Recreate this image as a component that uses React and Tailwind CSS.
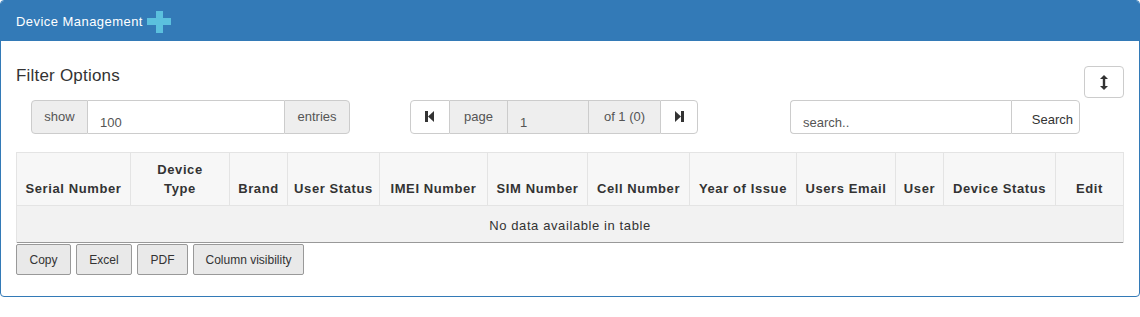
import { useState } from "react";

const columns = [
  { label: "Serial Number", w: "w-[114px]" },
  { label: "Device Type", w: "w-[99px]", wrap: true },
  { label: "Brand", w: "w-[58px]" },
  { label: "User Status", w: "w-[92px]" },
  { label: "IMEI Number", w: "w-[108px]" },
  { label: "SIM Number", w: "w-[100px]" },
  { label: "Cell Number", w: "w-[102px]" },
  { label: "Year of Issue", w: "w-[107px]" },
  { label: "Users Email", w: "w-[99px]" },
  { label: "User", w: "w-[48px]" },
  { label: "Device Status", w: "w-[112px]" },
  { label: "Edit", w: "w-[68px]" },
];

function PlusIcon() {
  return (
    <svg width="24" height="22" viewBox="0 0 24 22" className="ml-[4px]">
      <rect x="0" y="7" width="24" height="7" fill="#5bc0de" />
      <rect x="9" y="0" width="7" height="22" fill="#5bc0de" />
    </svg>
  );
}

function FirstIcon() {
  return (
    <svg width="10" height="11" viewBox="0 0 10 11">
      <rect x="0" y="0" width="3" height="11" fill="#333" />
      <path d="M9 0 L3 5.5 L9 11 Z" fill="#333" />
    </svg>
  );
}

function LastIcon() {
  return (
    <svg width="10" height="11" viewBox="0 0 10 11">
      <path d="M1 0 L7 5.5 L1 11 Z" fill="#333" />
      <rect x="7" y="0" width="3" height="11" fill="#333" />
    </svg>
  );
}

function ResizeIcon() {
  return (
    <svg width="8" height="15" viewBox="0 0 8 15">
      <path d="M4 0 L8 4 L5.2 4 L5.2 11 L8 11 L4 15 L0 11 L2.8 11 L2.8 4 L0 4 Z" fill="#333" />
    </svg>
  );
}

export default function App() {
  const [perPage, setPerPage] = useState("100");
  const [query, setQuery] = useState("");

  return (
    <div className="bg-white w-[1140px] h-[317px] font-['Liberation_Sans',Arial,sans-serif] text-[#333]">
      <div className="w-[1140px] h-[297px] border border-[#337ab7] rounded-[4px] overflow-hidden">
        {/* Heading */}
        <div className="h-[40px] bg-[#337ab7] flex items-center pl-[15px] pt-[1px]">
          <span className="text-white text-[13px] tracking-[0.45px]">Device Management</span>
          <PlusIcon />
        </div>

        <div className="px-[15px] pt-[25px]">
          <div className="flex justify-between items-start">
            <h3 className="text-[17px] leading-[18px] mt-[1px] tracking-[0.2px]">Filter Options</h3>
            <button className="w-[40px] h-[32px] border border-[#ccc] rounded-[4px] bg-white flex items-center justify-center">
              <ResizeIcon />
            </button>
          </div>

          {/* Controls */}
          <div className="flex items-start mt-[2px] h-[34px]">
            <div className="ml-[15px] flex h-[34px] text-[13px] text-[#555]">
              <span className="w-[57px] bg-[#eee] border border-[#ccc] rounded-l-[4px] flex items-center justify-center">
                show
              </span>
              <input
                value={perPage}
                onChange={(e) => setPerPage(e.target.value)}
                className="w-[196px] border-y border-[#ccc] pl-[12px] pt-[12px] text-[13px] text-[#555] outline-none bg-white"
              />
              <span className="w-[66px] bg-[#eee] border border-[#ccc] rounded-r-[4px] flex items-center justify-center">
                entries
              </span>
            </div>

            <div className="ml-[60px] flex h-[34px] text-[13px] text-[#555]">
              <button className="w-[40px] bg-white border border-[#ccc] rounded-l-[4px] flex items-center justify-center pb-[2px]">
                <FirstIcon />
              </button>
              <span className="w-[57px] bg-[#eee] border-y border-[#ccc] flex items-center justify-center">
                page
              </span>
              <input
                value="1"
                readOnly
                className="w-[82px] bg-[#eee] border border-[#ccc] pl-[12px] pt-[12px] text-[13px] text-[#555] outline-none"
              />
              <span className="w-[71px] bg-[#eee] border-y border-[#ccc] flex items-center justify-center">
                of 1 (0)
              </span>
              <button className="w-[38px] bg-white border border-[#ccc] rounded-r-[4px] flex items-center justify-center pb-[2px]">
                <LastIcon />
              </button>
            </div>

            <div className="ml-[92px] flex h-[34px] text-[13px] text-[#555]">
              <input
                value={query}
                onChange={(e) => setQuery(e.target.value)}
                placeholder="search.."
                className="w-[221px] border border-r-0 border-[#ccc] rounded-l-[4px] pl-[12px] pt-[12px] text-[13px] text-[#555] placeholder:text-[#555] outline-none"
              />
              <button className="w-[69px] bg-white border border-[#ccc] rounded-r-[4px] flex items-end justify-end pr-[6px] pb-[4px] text-[#333]">
                Search
              </button>
            </div>
          </div>

          {/* Table */}
          <table className="mt-[18px] w-[1107px] table-fixed border-collapse text-[13px]">
            <thead>
              <tr className="h-[53px] bg-[#f7f7f7]">
                {columns.map((c) => (
                  <th
                    key={c.label}
                    className={`${c.w} align-bottom text-center font-bold leading-[19px] pb-[7px] px-[2px] tracking-[0.6px] border border-[#e4e4e4] ${
                      c.wrap ? "" : "whitespace-nowrap"
                    }`}
                  >
                    {c.wrap ? (
                      <>
                        Device
                        <br />
                        Type
                      </>
                    ) : (
                      c.label
                    )}
                  </th>
                ))}
              </tr>
            </thead>
            <tbody>
              <tr className="h-[37px] bg-[#f2f2f2] border-b border-[#999]">
                <td colSpan={12} className="text-center border-x border-[#e4e4e4] pt-[3px] tracking-[0.6px]">
                  No data available in table
                </td>
              </tr>
            </tbody>
          </table>

          {/* Export buttons */}
          <div className="flex gap-[5px] mt-[1px] text-[12px]">
            {[
              ["Copy", "w-[55px]"],
              ["Excel", "w-[56px]"],
              ["PDF", "w-[51px]"],
              ["Column visibility", "w-[111px]"],
            ].map(([label, w]) => (
              <button
                key={label}
                className={`${w} h-[31px] bg-[#e9e9e9] border border-[#999] rounded-[2px] text-[#333]`}
              >
                {label}
              </button>
            ))}
          </div>
        </div>
      </div>
    </div>
  );
}
